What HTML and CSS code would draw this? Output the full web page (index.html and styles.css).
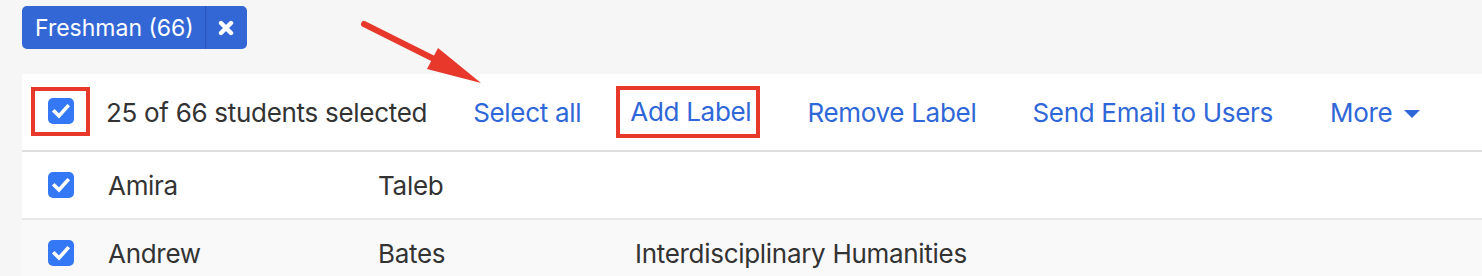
FILE: index.html
```html
<!DOCTYPE html>
<html lang="en">
<head>
    <meta charset="UTF-8">
    <title>Students</title>
    <link rel="stylesheet" href="styles.css">
</head>
<body>

    <div class="filters">
        <span class="tag">
            <span class="tag-label">Freshman (66)</span>
            <span class="tag-remove">
                <svg width="16" height="16" viewBox="0 0 16 16"><path d="M3 3 L13 13 M13 3 L3 13" stroke="#fff" stroke-width="4.4" stroke-linecap="round"/></svg>
            </span>
        </span>
    </div>

    <div class="panel">
        <div class="toolbar">
            <span class="flag-box">
                <span class="check"><svg width="26" height="26" viewBox="0 0 26 26"><path d="M6.5 13.5 L11 18 L19.5 8.5" fill="none" stroke="#fff" stroke-width="3.6" stroke-linecap="square"/></svg></span>
            </span>
            <span class="count">25 of 66 students selected</span>
            <a class="action select-all" href="#">Select all</a>
            <a class="action flagged" href="#">Add Label</a>
            <a class="action" href="#">Remove Label</a>
            <a class="action send" href="#">Send Email to Users</a>
            <a class="action more" href="#">More <span class="caret"></span></a>
        </div>

        <div class="row">
            <span class="check"><svg width="26" height="26" viewBox="0 0 26 26"><path d="M6.5 13.5 L11 18 L19.5 8.5" fill="none" stroke="#fff" stroke-width="3.6" stroke-linecap="square"/></svg></span>
            <span>Amira</span>
            <span>Taleb</span>
            <span></span>
        </div>
        <div class="row alt">
            <span class="check"><svg width="26" height="26" viewBox="0 0 26 26"><path d="M6.5 13.5 L11 18 L19.5 8.5" fill="none" stroke="#fff" stroke-width="3.6" stroke-linecap="square"/></svg></span>
            <span>Andrew</span>
            <span>Bates</span>
            <span>Interdisciplinary Humanities</span>
        </div>
    </div>

    <!-- annotation arrow -->
    <svg class="arrow" width="140" height="90" viewBox="350 10 140 90">
        <line x1="364" y1="24" x2="440" y2="62" stroke="#e8382b" stroke-width="6" stroke-linecap="round"/>
        <polygon points="438,48 427,69 481,83" fill="#e8382b"/>
    </svg>

</body>
</html>
```

FILE: styles.css
```css
body {
    font-family: Inter, "Liberation Sans", sans-serif;
    background-color: #f6f6f6;
    color: #333;
    margin: 0;
    overflow: hidden;
}
.filters {
    height: 74px;
    padding: 6px 0 0 22px;
    box-sizing: border-box;
}
.tag {
    display: inline-flex;
    height: 43px;
    background-color: #3367d6;
    border-radius: 5px;
    color: #fff;
    font-size: 23px;
}
.tag-label {
    display: flex;
    align-items: center;
    padding: 0 11px 0 13px;
    border-right: 1px solid #2853b8;
}
.tag-remove {
    display: flex;
    align-items: center;
    justify-content: center;
    width: 41px;
}
.panel {
    margin-left: 22px;
    background-color: #fff;
    font-size: 26px;
    letter-spacing: -0.3px;
}
.toolbar {
    display: flex;
    align-items: center;
    height: 76px;
    border-bottom: 2px solid #dedede;
}
.flag-box {
    display: flex;
    align-items: center;
    justify-content: center;
    width: 51px;
    height: 41px;
    margin: 0 0 2px 9px;
    border: 4px solid #e8382b;
}
.check {
    display: inline-flex;
    width: 26px;
    height: 26px;
    background-color: #3478f6;
    border-radius: 5px;
}
.count {
    margin-left: 16px;
}
.action {
    color: #2f67d8;
    text-decoration: none;
    margin-left: 54px;
}
.action.select-all {
    margin-left: 46px;
}
.action.flagged {
    margin-left: 35px;
    margin-right: -7px;
    padding: 6px 5px 7px 10px;
    border: 4px solid #e8382b;
}
.action.send {
    margin-left: 56px;
}
.action.more {
    margin-left: 57px;
}
.caret {
    display: inline-block;
    margin-left: 5px;
    vertical-align: middle;
    border-left: 8px solid transparent;
    border-right: 8px solid transparent;
    border-top: 8px solid #2f67d8;
}
.row {
    display: grid;
    grid-template-columns: 60px 270px 257px 1fr;
    align-items: center;
    height: 66px;
    padding-left: 26px;
    border-bottom: 2px solid #e8e8e8;
}
.row.alt {
    background-color: #f9f9f9;
}
.arrow {
    position: absolute;
    left: 350px;
    top: 10px;
}
```
